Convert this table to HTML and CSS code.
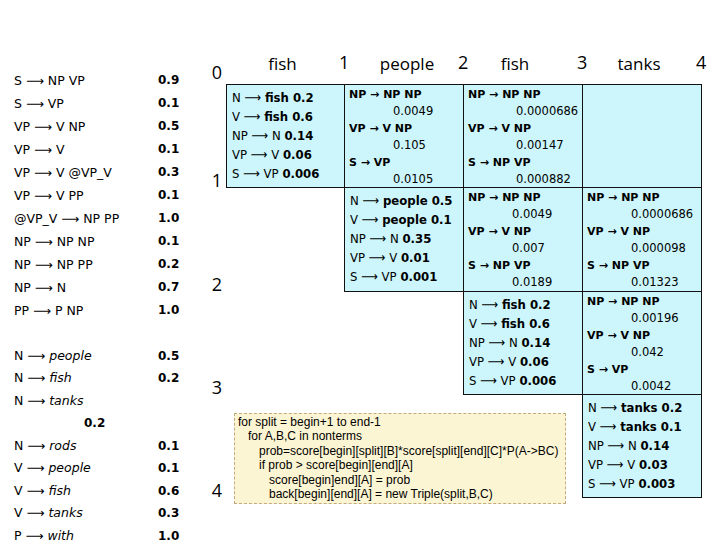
FILE: index.html
```html
<!DOCTYPE html>
<html>
<head>
<meta charset="utf-8">
<link rel="stylesheet" href="styles.css">
</head>
<body>
<div class="slide">
  <div class="grammar">
    <div class="group">
      <div class="rule"><span class="lhs">S ⟶ NP VP</span><span class="p">0.9</span></div>
      <div class="rule"><span class="lhs">S ⟶ VP</span><span class="p">0.1</span></div>
      <div class="rule"><span class="lhs">VP ⟶ V NP</span><span class="p">0.5</span></div>
      <div class="rule"><span class="lhs">VP ⟶ V</span><span class="p">0.1</span></div>
      <div class="rule"><span class="lhs">VP ⟶ V @VP_V</span><span class="p">0.3</span></div>
      <div class="rule"><span class="lhs">VP ⟶ V PP</span><span class="p">0.1</span></div>
      <div class="rule"><span class="lhs">@VP_V ⟶ NP PP</span><span class="p">1.0</span></div>
      <div class="rule"><span class="lhs">NP ⟶ NP NP</span><span class="p">0.1</span></div>
      <div class="rule"><span class="lhs">NP ⟶ NP PP</span><span class="p">0.2</span></div>
      <div class="rule"><span class="lhs">NP ⟶ N</span><span class="p">0.7</span></div>
      <div class="rule"><span class="lhs">PP ⟶ P NP</span><span class="p">1.0</span></div>
      <div class="rule"></div>
    </div>
    <div class="group lexicon">
      <div class="rule"><span class="lhs">N ⟶ <i>people</i></span><span class="p">0.5</span></div>
      <div class="rule"><span class="lhs">N ⟶ <i>fish</i></span><span class="p">0.2</span></div>
      <div class="rule"><span class="lhs">N ⟶ <i>tanks</i></span></div>
      <div class="rule"><span class="p wrapped">0.2</span></div>
      <div class="rule"><span class="lhs">N ⟶ <i>rods</i></span><span class="p">0.1</span></div>
      <div class="rule"><span class="lhs">V ⟶ <i>people</i></span><span class="p">0.1</span></div>
      <div class="rule"><span class="lhs">V ⟶ <i>fish</i></span><span class="p">0.6</span></div>
      <div class="rule"><span class="lhs">V ⟶ <i>tanks</i></span><span class="p">0.3</span></div>
      <div class="rule"><span class="lhs">P ⟶ <i>with</i></span><span class="p">1.0</span></div>
    </div>
  </div>

  <div class="chart">
    <div class="rl rl0">0</div>
    <div class="hd c1"><span class="word">fish</span><span class="num">1</span></div>
    <div class="hd c2"><span class="word w-people">people</span><span class="num">2</span></div>
    <div class="hd c3"><span class="word w-fish2">fish</span><span class="num">3</span></div>
    <div class="hd c4"><span class="word">tanks</span><span class="num">4</span></div>

    <div class="rl r0">1</div>
    <div class="rl r1">2</div>
    <div class="rl r2">3</div>
    <div class="rl r3">4</div>

    <!-- row 0 -->
    <div class="cell lex r0 c1">
      <div>N ⟶ <b>fish 0.2</b></div>
      <div>V ⟶ <b>fish 0.6</b></div>
      <div>NP ⟶ N <b>0.14</b></div>
      <div>VP ⟶ V <b>0.06</b></div>
      <div>S ⟶ VP <b>0.006</b></div>
    </div>
    <div class="cell bin r0 c2">
      <div class="br">NP → NP NP</div>
      <div class="bp">0.0049</div>
      <div class="br">VP → V NP</div>
      <div class="bp">0.105</div>
      <div class="br">S → VP</div>
      <div class="bp">0.0105</div>
    </div>
    <div class="cell bin r0 c3">
      <div class="br">NP → NP NP</div>
      <div class="bp bp-wide">0.0000686</div>
      <div class="br">VP → V NP</div>
      <div class="bp bp-wide">0.00147</div>
      <div class="br">S → NP VP</div>
      <div class="bp bp-wide">0.000882</div>
    </div>
    <div class="cell bin r0 c4"></div>

    <!-- row 1 -->
    <div class="cell lex r1 c2">
      <div>N ⟶ <b>people 0.5</b></div>
      <div>V ⟶ <b>people 0.1</b></div>
      <div>NP ⟶ N <b>0.35</b></div>
      <div>VP ⟶ V <b>0.01</b></div>
      <div>S ⟶ VP <b>0.001</b></div>
    </div>
    <div class="cell bin r1 c3">
      <div class="br">NP → NP NP</div>
      <div class="bp">0.0049</div>
      <div class="br">VP → V NP</div>
      <div class="bp">0.007</div>
      <div class="br">S → NP VP</div>
      <div class="bp">0.0189</div>
    </div>
    <div class="cell bin r1 c4">
      <div class="br">NP → NP NP</div>
      <div class="bp">0.0000686</div>
      <div class="br">VP → V NP</div>
      <div class="bp">0.000098</div>
      <div class="br">S → NP VP</div>
      <div class="bp">0.01323</div>
    </div>

    <!-- row 2 -->
    <div class="cell lex r2 c3">
      <div>N ⟶ <b>fish 0.2</b></div>
      <div>V ⟶ <b>fish 0.6</b></div>
      <div>NP ⟶ N <b>0.14</b></div>
      <div>VP ⟶ V <b>0.06</b></div>
      <div>S ⟶ VP <b>0.006</b></div>
    </div>
    <div class="cell bin r2 c4">
      <div class="br">NP → NP NP</div>
      <div class="bp">0.00196</div>
      <div class="br">VP → V NP</div>
      <div class="bp">0.042</div>
      <div class="br">S → VP</div>
      <div class="bp">0.0042</div>
    </div>

    <!-- row 3 -->
    <div class="cell lex r3 c4">
      <div>N ⟶ <b>tanks 0.2</b></div>
      <div>V ⟶ <b>tanks 0.1</b></div>
      <div>NP ⟶ N <b>0.14</b></div>
      <div>VP ⟶ V <b>0.03</b></div>
      <div>S ⟶ VP <b>0.003</b></div>
    </div>

    <div class="code">
      <div>for split = begin+1 to end-1</div>
      <div class="i1">for A,B,C in nonterms</div>
      <div class="i2">prob=score[begin][split][B]*score[split][end][C]*P(A-&gt;BC)</div>
      <div class="i2">if prob &gt; score[begin][end][A]</div>
      <div class="i3">score[begin]end][A] = prob</div>
      <div class="i3">back[begin][end][A] = new Triple(split,B,C)</div>
    </div>
  </div>
</div>
</body>
</html>
```

FILE: styles.css
```css
html, body {
  margin: 0;
  padding: 0;
  background: #ffffff;
}

body {
  width: 720px;
  height: 540px;
  overflow: hidden;
  color: #000;
}

.slide {
  display: flex;
  align-items: flex-start;
  width: 720px;
  height: 540px;
}

/* ---------- grammar list ---------- */
.grammar {
  width: 208px;
  flex: none;
  box-sizing: border-box;
  padding: 68.5px 0 0 14px;
  font-family: "DejaVu Sans", sans-serif;
  font-size: 12.5px;
}

.rule {
  display: flex;
  height: 23px;
  line-height: 23px;
  white-space: nowrap;
}

.lexicon .rule {
  height: 22.5px;
  line-height: 22.5px;
}

.lhs {
  width: 144px;
  flex: none;
}

.lhs i {
  font-style: italic;
}

.p {
  font-weight: bold;
  font-size: 12px;
}

.p.wrapped {
  margin-left: 70px;
}

/* ---------- chart ---------- */
.chart {
  display: grid;
  grid-template-columns: 18px 118px 119px 119px 119px;
  grid-template-rows: 84px 103px 104px 103px 103px;
  font-family: "DejaVu Sans", sans-serif;
}

.rl {
  grid-column: 1;
  align-self: end;
  text-align: center;
  font-family: "Open Sans", sans-serif;
  font-size: 18px;
  line-height: 20px;
  margin-bottom: -3px;
}

.rl.rl0 {
  grid-row: 1;
  margin-bottom: 2px;
}

.hd {
  grid-row: 1;
  align-self: end;
  display: flex;
  align-items: flex-end;
  padding-bottom: 10px;
  font-family: "Open Sans", sans-serif;
  font-size: 17px;
  line-height: 20px;
}

.word {
  flex: 1;
  text-align: center;
}

.w-people {
  padding-left: 12px;
}

.w-fish2 {
  padding-right: 10px;
}

.num {
  width: 10px;
  margin-right: -5px;
  text-align: center;
  font-size: 18px;
  padding-bottom: 2px;
}

.r0 { grid-row: 2; }
.r1 { grid-row: 3; }
.r2 { grid-row: 4; }
.r3 { grid-row: 5; }

.c1 { grid-column: 2; }
.c2 { grid-column: 3; }
.c3 { grid-column: 4; }
.c4 { grid-column: 5; }

.cell {
  border: 1px solid #111;
  background: #ccf6fb;
  margin: 0 -1px -1px 0;
  white-space: nowrap;
  overflow: hidden;
}

.cell.lex {
  padding: 3px 0 0 5px;
  font-size: 13px;
  line-height: 19px;
  font-stretch: condensed;
}

.cell.lex b {
  font-weight: bold;
}

.cell.bin {
  padding: 1px 0 0 4px;
  line-height: 17px;
}

.br {
  font-weight: bold;
  font-size: 11px;
}

.bp {
  font-size: 11.5px;
  padding-left: 44px;
}

.bp.bp-wide {
  padding-left: 48px;
}

/* ---------- code box ---------- */
.code {
  grid-row: 5;
  grid-column: 2 / 5;
  align-self: start;
  justify-self: start;
  box-sizing: border-box;
  width: 332px;
  height: 91px;
  margin: 19px 0 0 8px;
  padding: 1px 3px 0 3px;
  background: #fcf5d3;
  border: 1px dashed #c2ab82;
  font-family: "Liberation Sans", Arial, sans-serif;
  font-size: 12px;
  line-height: 14.4px;
  white-space: nowrap;
  position: relative;
  z-index: 1;
}

.i1 { padding-left: 10px; }
.i2 { padding-left: 21px; }
.i3 { padding-left: 31px; }
```
